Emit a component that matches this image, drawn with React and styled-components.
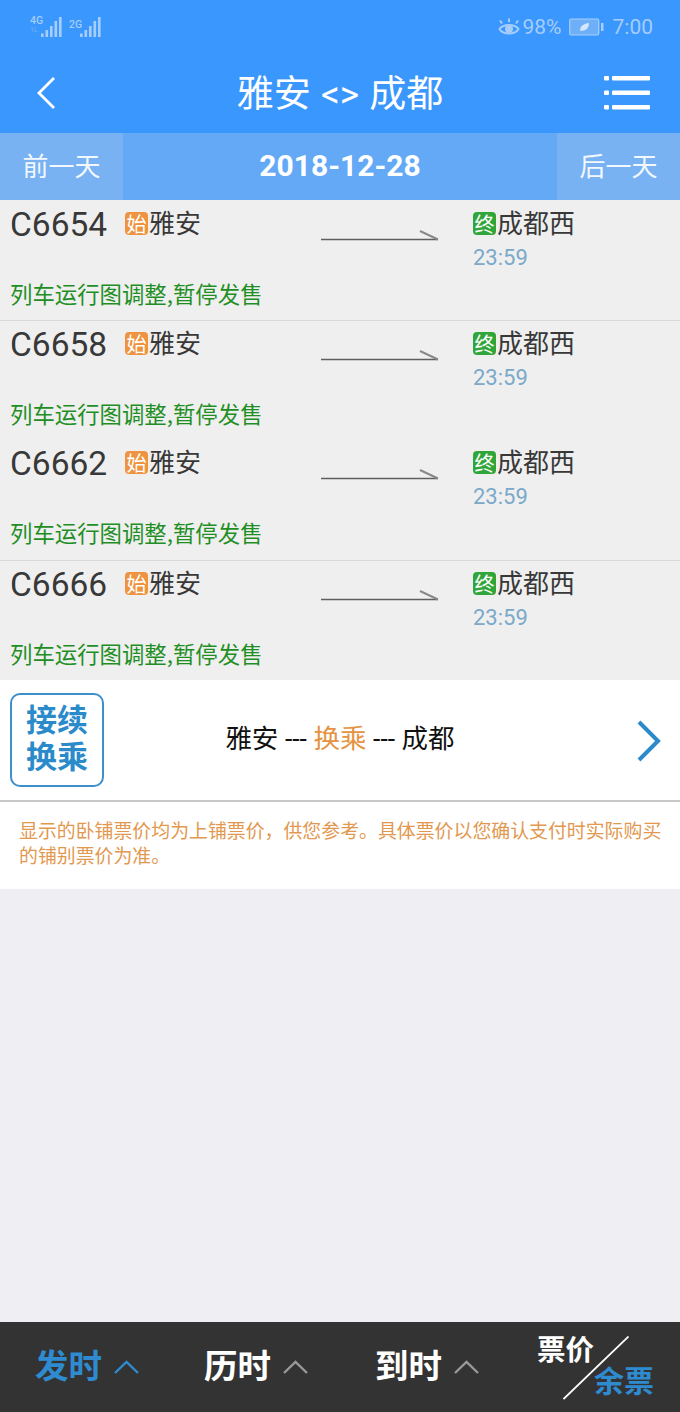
import React from "react";
import styled, { createGlobalStyle } from "styled-components";

const GlobalStyle = createGlobalStyle`
  html, body { margin: 0; padding: 0; background: #eeeef3; }
  body { font-family: Roboto, "Noto Sans CJK SC", sans-serif; }
  * { box-sizing: border-box; }
`;

const Page = styled.div`
  width: 680px;
  height: 1412px;
  display: flex;
  flex-direction: column;
  background: #eeeef3;
  overflow: hidden;
`;

const Header = styled.header`
  height: 133px;
  background: #3a97fd;
  flex: none;
`;

const StatusBar = styled.div`
  height: 53px;
  padding: 0 27px 0 30px;
  display: flex;
  align-items: center;
  justify-content: space-between;
  color: #a6cdfb;
  font-size: 21px;
`;

const StatusGroup = styled.div`
  display: flex;
  align-items: center;
  gap: ${(p) => p.$gap || 0}px;
`;

const NavBar = styled.div`
  height: 80px;
  padding: 0 30px;
  display: grid;
  grid-template-columns: 1fr auto 1fr;
  align-items: center;
  color: #fff;
`;

const NavLeft = styled.div`
  display: flex;
  padding-left: 6px;
`;

const NavRight = styled.div`
  display: flex;
  justify-content: flex-end;
`;

const Title = styled.h1`
  margin: 2px 0 0;
  font-size: 37px;
  font-weight: 400;
  line-height: 1;
  word-spacing: 1px;
  font-family: Roboto, "Noto Sans CJK SC", sans-serif;
`;

const DateBar = styled.div`
  height: 67px;
  flex: none;
  display: flex;
  align-items: stretch;
  background: #64a9f6;
  color: #fff;
`;

const DayButton = styled.div`
  width: 123px;
  padding-bottom: 5px;
  display: flex;
  align-items: center;
  justify-content: center;
  background: #78b2f2;
  font-size: 26px;
  font-family: "Noto Sans CJK SC", sans-serif;
  color: #f3f8fe;
`;

const DateText = styled.div`
  flex: 1;
  padding-bottom: 3px;
  display: flex;
  align-items: center;
  justify-content: center;
  font-size: 30px;
  font-weight: 700;
`;

const TrainList = styled.div`
  flex: none;
  margin-top: 1px;
`;

const TrainRow = styled.div`
  height: ${(p) => p.$height}px;
  padding-left: 10px;
  background: #efefef;
  border-bottom: ${(p) => (p.$divider ? "1px solid #d9d9d9" : "none")};
  display: grid;
  grid-template-columns: 115px 196px 152px 1fr;
  grid-template-rows: 74px auto;
  align-content: start;
`;

const TrainCode = styled.div`
  font-size: 33.5px;
  line-height: 48px;
  color: #383838;
`;

const StationCell = styled.div`
  padding-top: 2px;
`;

const Station = styled.div`
  display: flex;
  align-items: center;
  height: 36px;
  font-size: 26px;
  color: #383838;
  font-family: "Noto Sans CJK SC", sans-serif;
`;

const Badge = styled.span`
  width: 23px;
  height: 23px;
  margin: 4px 1px 0 0;
  border-radius: 4px;
  background: ${(p) => p.$color};
  color: #fff;
  font-size: 20px;
  line-height: 23px;
  text-align: center;
`;

const ArriveTime = styled.div`
  font-size: 22px;
  line-height: 26px;
  margin-top: 6px;
  color: #7aa9c9;
`;

const ArrowCell = styled.div`
  padding-top: 25px;
`;

const Message = styled.div`
  grid-column: 1 / -1;
  font-size: 22.4px;
  line-height: 36px;
  color: #1f8f25;
  font-family: "Noto Sans CJK SC", sans-serif;
`;

const TransferRow = styled.div`
  height: 122px;
  flex: none;
  padding: 13px 18px 0 10px;
  background: #fff;
  border-bottom: 2px solid #c8c8c8;
  display: flex;
  align-items: flex-start;
`;

const TransferBadge = styled.div`
  width: 94px;
  height: 94px;
  padding-bottom: 8px;
  border: 2px solid #3d90c9;
  border-radius: 10px;
  display: flex;
  flex: none;
  align-items: center;
  justify-content: center;
  text-align: center;
  font-size: 31px;
  line-height: 37px;
  font-weight: 700;
  color: #2a8aca;
  font-family: "Noto Sans CJK SC", sans-serif;
`;

const TransferText = styled.div`
  flex: 1;
  height: 86px;
  padding-right: 60px;
  display: flex;
  align-items: center;
  justify-content: center;
  font-size: 26.5px;
  color: #111;
  white-space: pre;
  font-family: Roboto, "Noto Sans CJK SC", sans-serif;
`;

const Accent = styled.span`
  color: #e59242;
`;

const ChevronBox = styled.div`
  flex: none;
  margin-top: 27px;
`;

const Note = styled.div`
  height: 87px;
  flex: none;
  padding: 15px 17px 0 19px;
  background: #fff;
  font-size: 18.9px;
  line-height: 25px;
  color: #e2984f;
  font-family: "Noto Sans CJK SC", sans-serif;
`;

const Spacer = styled.div`
  flex: 1;
`;

const SortBar = styled.nav`
  height: 90px;
  flex: none;
  background: #333;
  display: grid;
  grid-template-columns: repeat(4, 170px);
`;

const SortItem = styled.div`
  display: flex;
  align-items: center;
  gap: 12px;
  padding-left: ${(p) => p.$inset}px;
  color: ${(p) => (p.$active ? "#2f8bd0" : "#fff")};
`;

const SortLabel = styled.span`
  padding-bottom: 8px;
  font-size: 33.5px;
  font-weight: 700;
  font-family: "Noto Sans CJK SC", sans-serif;
`;

const PriceCell = styled.div`
  position: relative;
  font-weight: 700;
  font-family: "Noto Sans CJK SC", sans-serif;
`;

const PriceLabel = styled.span`
  position: absolute;
  left: 27px;
  top: 6px;
  color: #fff;
  font-size: 28.5px;
  line-height: 40px;
`;

const RemainLabel = styled.span`
  position: absolute;
  left: 84px;
  top: 37px;
  color: #2f8bd0;
  font-size: 30px;
  line-height: 40px;
`;

const Diagonal = styled.svg`
  position: absolute;
  left: 53px;
  top: 14px;
`;

const SignalLabel = styled.div`
  width: ${(p) => p.$width}px;
  margin-top: -5px;
  margin-left: ${(p) => p.$offset || 0}px;
  font-size: 10.5px;
  font-weight: 500;
  line-height: 11px;
  color: #a6cdfb;
`;

const SubLabel = styled.div`
  font-size: 7px;
  line-height: 8px;
  opacity: 0.5;
  font-weight: 400;
`;

function SignalBars() {
  return (
    <svg width="21" height="20" viewBox="0 0 21 20" fill="#a6cdfb">
      <rect x="0" y="16.5" width="2.6" height="3.5" />
      <rect x="4.5" y="13" width="2.6" height="7" />
      <rect x="9" y="9" width="2.6" height="11" />
      <rect x="13.5" y="4" width="2.6" height="16" />
      <rect x="18" y="0" width="2.6" height="20" />
    </svg>
  );
}

function LineArrow() {
  return (
    <svg width="118" height="12" viewBox="0 0 118 12" fill="none" stroke="#5f5f5f">
      <path d="M0 10.5H117" strokeWidth="1.6" />
      <path d="M99 2L117 10.5" strokeWidth="2" stroke="#888" />
    </svg>
  );
}

function UpChevron({ color }) {
  return (
    <svg width="25" height="14" viewBox="0 0 25 14" fill="none" stroke={color} strokeWidth="2.4">
      <path d="M1 13L12.5 2L24 13" />
    </svg>
  );
}

const trains = [
  { code: "C6654", height: 120, divider: true },
  { code: "C6658", height: 119, divider: false },
  { code: "C6662", height: 121, divider: true },
  { code: "C6666", height: 119, divider: false },
];

export default function App() {
  return (
    <Page>
      <GlobalStyle />
      <Header>
        <StatusBar>
          <StatusGroup>
            <SignalLabel $width={11}>
              4G
              <SubLabel>1L</SubLabel>
            </SignalLabel>
            <SignalBars />
            <SignalLabel $width={11} $offset={7}>
              2G
            </SignalLabel>
            <SignalBars />
          </StatusGroup>
          <StatusGroup $gap={3}>
            <svg width="22" height="20" viewBox="0 0 22 20" fill="none" stroke="#a6cdfb" strokeWidth="2">
              <path d="M1.5 12C5 6.5 17 6.5 20.5 12C17 18 5 18 1.5 12Z" />
              <circle cx="11" cy="12" r="4" fill="#a6cdfb" stroke="none" />
              <path d="M4 6.5L2 3.5M11 5V1.5M18 6.5L20 3.5" />
            </svg>
            <span>98%</span>
            <svg width="35" height="18" viewBox="0 0 35 18" style={{ marginLeft: 4, marginRight: 6 }}>
              <rect x="0.75" y="1" width="29" height="16" rx="1.5" fill="#6eb0f8" stroke="#a6cdfb" strokeWidth="1.2" />
              <rect x="32" y="5" width="2.5" height="8" fill="#a6cdfb" />
              <path d="M11 12.5C11 8 15 5.5 20 5C20 10 17 13.5 11 12.5Z" fill="#d5e7fd" />
            </svg>
            <span>7:00</span>
          </StatusGroup>
        </StatusBar>
        <NavBar>
          <NavLeft>
            <svg width="20" height="34" viewBox="0 0 20 34" fill="none" stroke="#fff" strokeWidth="2.8">
              <path d="M18 2L3 17L18 32" />
            </svg>
          </NavLeft>
          <Title>雅安 &lt;&gt; 成都</Title>
          <NavRight>
            <svg width="46" height="34" viewBox="0 0 46 34" fill="#fff">
              <rect x="0" y="0" width="5" height="4.6" rx="1" />
              <rect x="8" y="0" width="38" height="4.6" rx="1" />
              <rect x="0" y="14.5" width="5" height="4.6" rx="1" />
              <rect x="8" y="14.5" width="38" height="4.6" rx="1" />
              <rect x="0" y="29" width="5" height="4.6" rx="1" />
              <rect x="8" y="29" width="38" height="4.6" rx="1" />
            </svg>
          </NavRight>
        </NavBar>
      </Header>
      <DateBar>
        <DayButton>前一天</DayButton>
        <DateText>2018-12-28</DateText>
        <DayButton>后一天</DayButton>
      </DateBar>
      <TrainList>
        {trains.map((train) => (
          <TrainRow key={train.code} $height={train.height} $divider={train.divider}>
            <TrainCode>{train.code}</TrainCode>
            <StationCell>
              <Station>
                <Badge $color="#ee9440">始</Badge>雅安
              </Station>
            </StationCell>
            <ArrowCell>
              <LineArrow />
            </ArrowCell>
            <StationCell>
              <Station>
                <Badge $color="#30a53a">终</Badge>成都西
              </Station>
              <ArriveTime>23:59</ArriveTime>
            </StationCell>
            <Message>列车运行图调整,暂停发售</Message>
          </TrainRow>
        ))}
      </TrainList>
      <TransferRow>
        <TransferBadge>
          接续
          <br />
          换乘
        </TransferBadge>
        <TransferText>
          雅安 --- <Accent>换乘</Accent> --- 成都
        </TransferText>
        <ChevronBox>
          <svg width="26" height="42" viewBox="0 0 26 42" fill="none" stroke="#2a8aca" strokeWidth="4">
            <path d="M3 2L22 21L3 40" />
          </svg>
        </ChevronBox>
      </TransferRow>
      <Note>显示的卧铺票价均为上铺票价，供您参考。具体票价以您确认支付时实际购买的铺别票价为准。</Note>
      <Spacer />
      <SortBar>
        <SortItem $inset={35} $active>
          <SortLabel>发时</SortLabel>
          <UpChevron color="#2f8bd0" />
        </SortItem>
        <SortItem $inset={34}>
          <SortLabel>历时</SortLabel>
          <UpChevron color="#999" />
        </SortItem>
        <SortItem $inset={35}>
          <SortLabel>到时</SortLabel>
          <UpChevron color="#999" />
        </SortItem>
        <PriceCell>
          <PriceLabel>票价</PriceLabel>
          <RemainLabel>余票</RemainLabel>
          <Diagonal width="66" height="64" viewBox="0 0 66 64" fill="none" stroke="#fff" strokeWidth="1.8">
            <path d="M0.5 63L65.5 0.5" />
          </Diagonal>
        </PriceCell>
      </SortBar>
    </Page>
  );
}
